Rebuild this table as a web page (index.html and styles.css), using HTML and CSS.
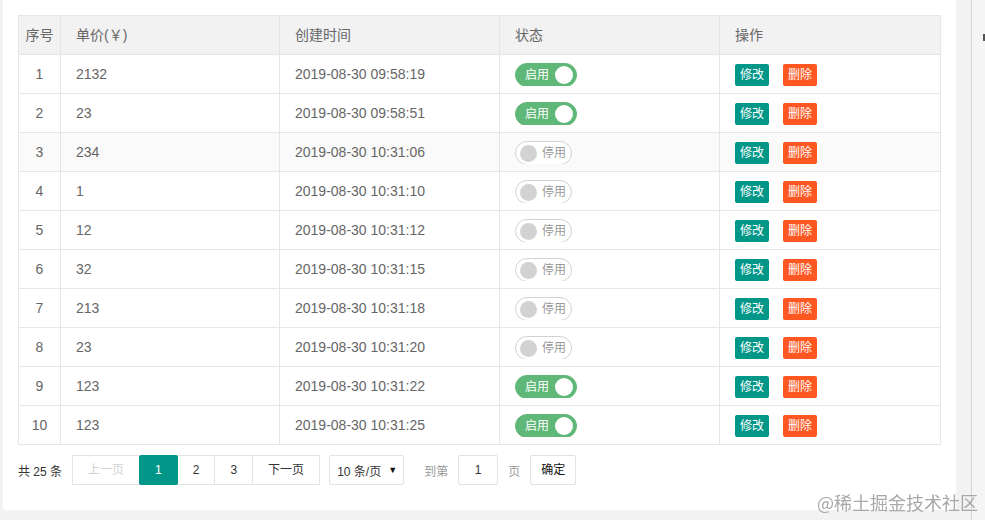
FILE: index.html
```html
<!DOCTYPE html>
<html lang="zh-CN">
<head>
<meta charset="utf-8">
<title>订单</title>
<link rel="stylesheet" href="styles.css">
</head>
<body>
<div class="page">
  <main class="main">
    <div class="card">
      <table class="tbl">
        <colgroup>
          <col class="w-idx"><col class="w-price"><col class="w-time"><col class="w-state"><col class="w-op">
        </colgroup>
        <thead>
          <tr><th class="c-idx"><div class="cell">序号</div></th><th><div class="cell">单价(￥)</div></th><th><div class="cell">创建时间</div></th><th><div class="cell">状态</div></th><th><div class="cell">操作</div></th></tr>
        </thead>
        <tbody>
          <tr><td class="c-idx"><div class="cell">1</div></td><td><div class="cell">2132</div></td><td><div class="cell">2019-08-30 09:58:19</div></td><td><div class="cell"><span class="sw sw-on"><span class="sw-txt">启用</span><i class="knob"></i></span></div></td><td><div class="cell"><span class="btn btn-edit">修改</span><span class="btn btn-del">删除</span></div></td></tr>
          <tr><td class="c-idx"><div class="cell">2</div></td><td><div class="cell">23</div></td><td><div class="cell">2019-08-30 09:58:51</div></td><td><div class="cell"><span class="sw sw-on"><span class="sw-txt">启用</span><i class="knob"></i></span></div></td><td><div class="cell"><span class="btn btn-edit">修改</span><span class="btn btn-del">删除</span></div></td></tr>
          <tr class="hover"><td class="c-idx"><div class="cell">3</div></td><td><div class="cell">234</div></td><td><div class="cell">2019-08-30 10:31:06</div></td><td><div class="cell"><span class="sw sw-off"><i class="knob"></i><span class="sw-txt">停用</span></span></div></td><td><div class="cell"><span class="btn btn-edit">修改</span><span class="btn btn-del">删除</span></div></td></tr>
          <tr><td class="c-idx"><div class="cell">4</div></td><td><div class="cell">1</div></td><td><div class="cell">2019-08-30 10:31:10</div></td><td><div class="cell"><span class="sw sw-off"><i class="knob"></i><span class="sw-txt">停用</span></span></div></td><td><div class="cell"><span class="btn btn-edit">修改</span><span class="btn btn-del">删除</span></div></td></tr>
          <tr><td class="c-idx"><div class="cell">5</div></td><td><div class="cell">12</div></td><td><div class="cell">2019-08-30 10:31:12</div></td><td><div class="cell"><span class="sw sw-off"><i class="knob"></i><span class="sw-txt">停用</span></span></div></td><td><div class="cell"><span class="btn btn-edit">修改</span><span class="btn btn-del">删除</span></div></td></tr>
          <tr><td class="c-idx"><div class="cell">6</div></td><td><div class="cell">32</div></td><td><div class="cell">2019-08-30 10:31:15</div></td><td><div class="cell"><span class="sw sw-off"><i class="knob"></i><span class="sw-txt">停用</span></span></div></td><td><div class="cell"><span class="btn btn-edit">修改</span><span class="btn btn-del">删除</span></div></td></tr>
          <tr><td class="c-idx"><div class="cell">7</div></td><td><div class="cell">213</div></td><td><div class="cell">2019-08-30 10:31:18</div></td><td><div class="cell"><span class="sw sw-off"><i class="knob"></i><span class="sw-txt">停用</span></span></div></td><td><div class="cell"><span class="btn btn-edit">修改</span><span class="btn btn-del">删除</span></div></td></tr>
          <tr><td class="c-idx"><div class="cell">8</div></td><td><div class="cell">23</div></td><td><div class="cell">2019-08-30 10:31:20</div></td><td><div class="cell"><span class="sw sw-off"><i class="knob"></i><span class="sw-txt">停用</span></span></div></td><td><div class="cell"><span class="btn btn-edit">修改</span><span class="btn btn-del">删除</span></div></td></tr>
          <tr><td class="c-idx"><div class="cell">9</div></td><td><div class="cell">123</div></td><td><div class="cell">2019-08-30 10:31:22</div></td><td><div class="cell"><span class="sw sw-on"><span class="sw-txt">启用</span><i class="knob"></i></span></div></td><td><div class="cell"><span class="btn btn-edit">修改</span><span class="btn btn-del">删除</span></div></td></tr>
          <tr><td class="c-idx"><div class="cell">10</div></td><td><div class="cell">123</div></td><td><div class="cell">2019-08-30 10:31:25</div></td><td><div class="cell"><span class="sw sw-on"><span class="sw-txt">启用</span><i class="knob"></i></span></div></td><td><div class="cell"><span class="btn btn-edit">修改</span><span class="btn btn-del">删除</span></div></td></tr>
        </tbody>
      </table>
      <div class="pager">
        <span class="count">共 25 条</span>
        <div class="pages">
          <span class="pg pg-disabled">上一页</span>
          <span class="pg pg-cur">1</span>
          <span class="pg">2</span>
          <span class="pg">3</span>
          <span class="pg">下一页</span>
        </div>
        <div class="limits"><span>10 条/页</span><span class="arrow">▼</span></div>
        <span class="skip-label">到第</span>
        <span class="skip-input">1</span>
        <span class="skip-label2">页</span>
        <span class="skip-btn">确定</span>
      </div>
    </div>
  </main>
  <aside class="side">
    <div class="side-line"></div>
    <div class="side-rest"><div class="side-mark"></div></div>
  </aside>
</div>
<div class="watermark">@稀土掘金技术社区</div>
</body>
</html>
```
FILE: styles.css
```css
body {
  margin: 0;
  background: #f2f2f2;
  font-family: "Liberation Sans", "Noto Sans CJK SC", sans-serif;
  font-size: 14px;
  color: #666;
}
.page {
  display: flex;
  height: 520px;
  overflow: hidden;
}
.main {
  width: 956px;
  padding-left: 3px;
  box-sizing: border-box;
  flex: none;
}
.card {
  background: #fff;
  padding: 15px 15px 25px;
  border-radius: 0 0 2px 2px;
}
.tbl {
  width: 922px;
  border-collapse: collapse;
  table-layout: fixed;
}
.w-idx { width: 42px; }
.w-price { width: 219px; }
.w-time { width: 220px; }
.w-state { width: 220px; }
.w-op { width: 221px; }
.tbl th,
.tbl td {
  border: 1px solid #e6e6e6;
  padding: 7px 15px;
  text-align: left;
  font-weight: normal;
  white-space: nowrap;
}
.cell {
  height: 24px;
  line-height: 24px;
  overflow: hidden;
  display: flex;
  align-items: center;
}
.tbl th {
  background: #f2f2f2;
}
.tbl .c-idx {
  padding: 7px 0;
}
.tbl .c-idx .cell {
  justify-content: center;
}
.tbl tr.hover td {
  background: #fafafa;
}
.sw {
  display: inline-flex;
  align-items: center;
  box-sizing: border-box;
  height: 24px;
  margin-top: 2px;
  border: 1px solid #d2d2d2;
  border-radius: 12px;
  font-size: 12px;
  line-height: 1;
}
.knob {
  display: block;
  border-radius: 50%;
}
.sw-on {
  background: #5fb878;
  border-color: #5fb878;
  color: #fff;
  padding: 0 3px 0 9px;
  gap: 6px;
}
.sw-on .knob {
  width: 18px;
  height: 18px;
  background: #fff;
}
.sw-off {
  background: #fff;
  color: #999;
  padding: 0 5px 0 4px;
  gap: 5px;
}
.sw-off .knob {
  width: 17px;
  height: 17px;
  background: #d2d2d2;
}
.btn {
  display: inline-block;
  height: 22px;
  line-height: 22px;
  margin-top: 2px;
  padding: 0 5px;
  font-size: 12px;
  color: #fff;
  border-radius: 2px;
}
.btn-edit { background: #009688; }
.btn-del { background: #ff5722; margin-left: 14px; }

.pager {
  display: flex;
  align-items: center;
  margin-top: 10px;
  height: 30px;
  font-size: 12px;
  color: #333;
}
.count { margin-right: 10px; }
.pages { display: flex; }
.pg {
  height: 30px;
  box-sizing: border-box;
  border: 1px solid #e2e2e2;
  padding: 0 15px;
  line-height: 28px;
  margin-right: -1px;
  background: #fff;
  color: #333;
}
.pg-disabled { color: #d2d2d2; }
.pg-cur {
  background: #009688;
  border-color: #009688;
  color: #fff;
  border-radius: 2px;
  position: relative;
}
.limits {
  margin-left: 10px;
  width: 75px;
  height: 30px;
  box-sizing: border-box;
  border: 1px solid #e2e2e2;
  border-radius: 2px;
  padding: 0 6px 0 7px;
  display: flex;
  align-items: center;
  justify-content: space-between;
  color: #333;
}
.arrow { font-size: 9px; color: #111; }
.skip-label { margin-left: 20px; color: #999; }
.skip-input {
  margin: 0 10px;
  width: 40px;
  height: 30px;
  box-sizing: border-box;
  border: 1px solid #e2e2e2;
  border-radius: 2px;
  text-align: center;
  line-height: 28px;
  color: #333;
}
.skip-label2 { color: #999; }
.skip-btn {
  margin-left: 10px;
  height: 30px;
  box-sizing: border-box;
  border: 1px solid #e2e2e2;
  border-radius: 2px;
  padding: 0 10px;
  line-height: 28px;
  color: #111;
}
.side {
  flex: none;
  width: 29px;
  display: flex;
  padding-left: 15px;
  box-sizing: border-box;
}
.side-line {
  width: 1px;
  background: #d4d4d4;
}
.side-rest {
  flex: 1;
  background: #f5f5f5;
}
.side-mark {
  margin: 34px 0 0 11px;
  width: 2px;
  height: 7px;
  background: #555;
}
.watermark {
  position: fixed;
  right: 7px;
  bottom: 7px;
  font-size: 18px;
  color: #a8a8a8;
  font-family: "Noto Sans CJK SC", sans-serif;
  line-height: 22px;
}
```
